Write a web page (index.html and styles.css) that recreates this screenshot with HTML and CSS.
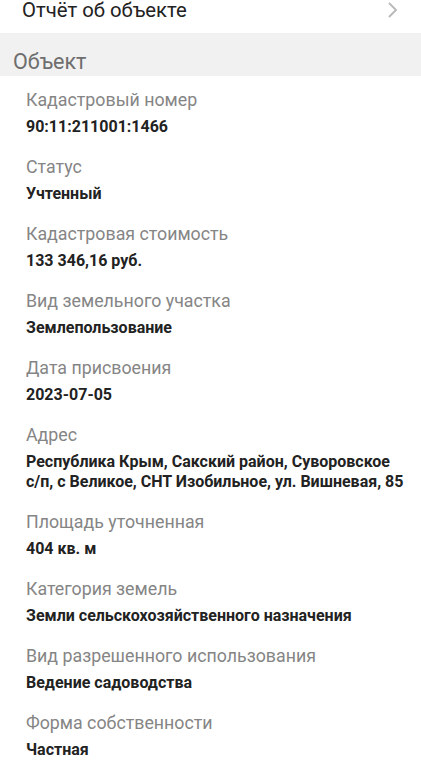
FILE: index.html
```html
<!DOCTYPE html>
<html lang="ru">
<head>
<meta charset="utf-8">
<link rel="stylesheet" href="styles.css">
</head>
<body>
<div class="report-row">
  <span class="report-title">Отчёт об объекте</span>
  <svg class="chevron" width="12" height="18" viewBox="0 0 12 18"><path d="M2 2 L9 9 L2 16" fill="none" stroke="#b8b8b8" stroke-width="1.8"/></svg>
</div>
<div class="section-header">Объект</div>
<div class="items">
  <div class="item"><div class="label">Кадастровый номер</div><div class="value">90:11:211001:1466</div></div>
  <div class="item"><div class="label">Статус</div><div class="value">Учтенный</div></div>
  <div class="item"><div class="label">Кадастровая стоимость</div><div class="value">133 346,16 руб.</div></div>
  <div class="item"><div class="label">Вид земельного участка</div><div class="value">Землепользование</div></div>
  <div class="item"><div class="label">Дата присвоения</div><div class="value">2023-07-05</div></div>
  <div class="item"><div class="label">Адрес</div><div class="value">Республика Крым, Сакский район, Суворовское<br>с/п, с Великое, СНТ Изобильное, ул. Вишневая, 85</div></div>
  <div class="item"><div class="label">Площадь уточненная</div><div class="value">404 кв. м</div></div>
  <div class="item"><div class="label">Категория земель</div><div class="value">Земли сельскохозяйственного назначения</div></div>
  <div class="item"><div class="label">Вид разрешенного использования</div><div class="value">Ведение садоводства</div></div>
  <div class="item"><div class="label">Форма собственности</div><div class="value">Частная</div></div>
</div>
</body>
</html>
```
FILE: styles.css
```css
html, body {
  margin: 0;
  padding: 0;
  background: #ffffff;
  font-family: Roboto, "Noto Sans", sans-serif;
}
body {
  width: 421px;
  overflow: hidden;
}
.report-row {
  height: 33px;
  display: flex;
  align-items: flex-start;
  justify-content: space-between;
  padding: 0 22px 0 22px;
  box-sizing: border-box;
}
.report-title {
  font-size: 20.3px;
  line-height: 21px;
  color: #222222;
}
.chevron {
  margin-top: 1px;
}
.section-header {
  background: #f1f1f1;
  height: 43px;
  box-sizing: border-box;
  padding: 16px 0 0 13px;
  font-size: 21.5px;
  line-height: 26px;
  color: #6e6e6e;
}
.items {
  padding: 12px 0 0 26px;
}
.item {
  margin-bottom: 18px;
}
.label {
  font-size: 17.8px;
  line-height: 24px;
  color: #858585;
}
.value {
  margin-top: 5px;
  font-size: 16px;
  line-height: 20px;
  font-weight: bold;
  color: #222222;
}
```
